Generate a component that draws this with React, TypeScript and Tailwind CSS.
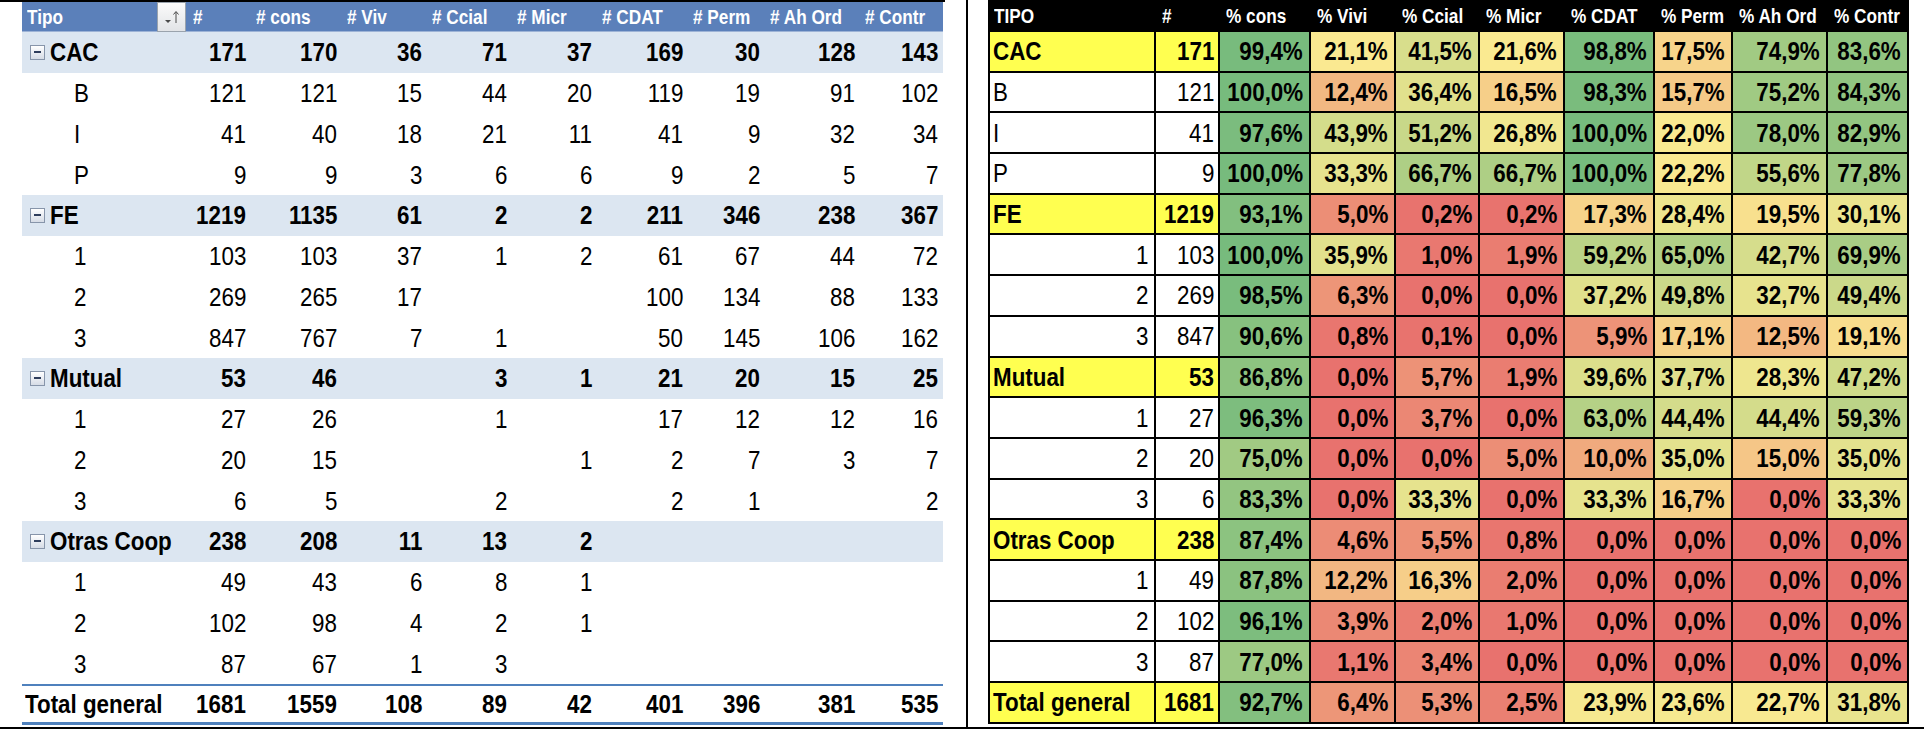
import React from 'react';

type Row = {
  label: string;
  kind: 'group' | 'child' | 'total';
  counts: (number | null)[];
  pct: number[];
};

const rows: Row[] = [
  { label: 'CAC', kind: 'group', counts: [171, 170, 36, 71, 37, 169, 30, 128, 143], pct: [99.4, 21.1, 41.5, 21.6, 98.8, 17.5, 74.9, 83.6] },
  { label: 'B', kind: 'child', counts: [121, 121, 15, 44, 20, 119, 19, 91, 102], pct: [100, 12.4, 36.4, 16.5, 98.3, 15.7, 75.2, 84.3] },
  { label: 'I', kind: 'child', counts: [41, 40, 18, 21, 11, 41, 9, 32, 34], pct: [97.6, 43.9, 51.2, 26.8, 100, 22.0, 78.0, 82.9] },
  { label: 'P', kind: 'child', counts: [9, 9, 3, 6, 6, 9, 2, 5, 7], pct: [100, 33.3, 66.7, 66.7, 100, 22.2, 55.6, 77.8] },
  { label: 'FE', kind: 'group', counts: [1219, 1135, 61, 2, 2, 211, 346, 238, 367], pct: [93.1, 5.0, 0.2, 0.2, 17.3, 28.4, 19.5, 30.1] },
  { label: '1', kind: 'child', counts: [103, 103, 37, 1, 2, 61, 67, 44, 72], pct: [100, 35.9, 1.0, 1.9, 59.2, 65.0, 42.7, 69.9] },
  { label: '2', kind: 'child', counts: [269, 265, 17, null, null, 100, 134, 88, 133], pct: [98.5, 6.3, 0.0, 0.0, 37.2, 49.8, 32.7, 49.4] },
  { label: '3', kind: 'child', counts: [847, 767, 7, 1, null, 50, 145, 106, 162], pct: [90.6, 0.8, 0.1, 0.0, 5.9, 17.1, 12.5, 19.1] },
  { label: 'Mutual', kind: 'group', counts: [53, 46, null, 3, 1, 21, 20, 15, 25], pct: [86.8, 0.0, 5.7, 1.9, 39.6, 37.7, 28.3, 47.2] },
  { label: '1', kind: 'child', counts: [27, 26, null, 1, null, 17, 12, 12, 16], pct: [96.3, 0.0, 3.7, 0.0, 63.0, 44.4, 44.4, 59.3] },
  { label: '2', kind: 'child', counts: [20, 15, null, null, 1, 2, 7, 3, 7], pct: [75.0, 0.0, 0.0, 5.0, 10.0, 35.0, 15.0, 35.0] },
  { label: '3', kind: 'child', counts: [6, 5, null, 2, null, 2, 1, null, 2], pct: [83.3, 0.0, 33.3, 0.0, 33.3, 16.7, 0.0, 33.3] },
  { label: 'Otras Coop', kind: 'group', counts: [238, 208, 11, 13, 2, null, null, null, null], pct: [87.4, 4.6, 5.5, 0.8, 0, 0, 0, 0] },
  { label: '1', kind: 'child', counts: [49, 43, 6, 8, 1, null, null, null, null], pct: [87.8, 12.2, 16.3, 2.0, 0, 0, 0, 0] },
  { label: '2', kind: 'child', counts: [102, 98, 4, 2, 1, null, null, null, null], pct: [96.1, 3.9, 2.0, 1.0, 0, 0, 0, 0] },
  { label: '3', kind: 'child', counts: [87, 67, 1, 3, null, null, null, null, null], pct: [77.0, 1.1, 3.4, 0, 0, 0, 0, 0] },
  { label: 'Total general', kind: 'total', counts: [1681, 1559, 108, 89, 42, 401, 396, 381, 535], pct: [92.7, 6.4, 5.3, 2.5, 23.9, 23.6, 22.7, 31.8] },
];

const leftHeads = ['#', '# cons', '# Viv', '# Ccial', '# Micr', '# CDAT', '# Perm', '# Ah Ord', '# Contr'];
const rightHeads = ['TIPO', '#', '% cons', '% Vivi', '% Ccial', '% Micr', '% CDAT', '% Perm', '% Ah Ord', '% Contr'];

const LW = ['w-[166px]', 'w-[63px]', 'w-[91px]', 'w-[85px]', 'w-[85px]', 'w-[85px]', 'w-[91px]', 'w-[77px]', 'w-[95px]', 'w-[83px]'];
const RW = ['w-[168px]', 'w-[64px]', 'w-[91px]', 'w-[85px]', 'w-[84px]', 'w-[85px]', 'w-[90px]', 'w-[78px]', 'w-[95px]', 'w-[81px]'];

const FONT = "font-['Liberation_Sans','Arial',sans-serif]";

// excel-like 3 colour scale: min 0 red, median yellow, max 100 green
const RED = [232, 114, 110];
const YEL = [250, 234, 145];
const GRN = [119, 187, 125];
const MID = 21.35;

function mix(a: number[], b: number[], t: number) {
  const c = a.map((v, i) => Math.round(v + (b[i] - v) * t));
  return `rgb(${c[0]},${c[1]},${c[2]})`;
}

function scale(v: number) {
  if (v <= MID) return mix(RED, YEL, v / MID);
  return mix(YEL, GRN, (v - MID) / (100 - MID));
}

const fmt = (v: number) => v.toFixed(1).replace('.', ',') + '%';

// no Arial Narrow installed, so squeeze Arial-metric text horizontally
function N({ children, right }: { children: React.ReactNode; right?: boolean }) {
  return (
    <span className={`inline-block whitespace-nowrap scale-x-[0.86] ${right ? 'origin-right' : 'origin-left'}`}>
      {children}
    </span>
  );
}

function FilterButton() {
  return (
    <div className="w-[29px] h-[30px] border border-[#9aa3ad] bg-gradient-to-b from-[#fbfbfb] to-[#e2e4e7] flex items-center justify-center">
      <svg width="20" height="16" viewBox="0 0 20 16">
        <path d="M3 11h6l-3 3z" fill="#4a4a4a" />
        <path d="M14 14V3" stroke="#4a4a4a" strokeWidth="1" />
        <path d="M11.5 5.5L14 2.5l2.5 3" stroke="#4a4a4a" strokeWidth="1" fill="none" />
      </svg>
    </div>
  );
}

function Collapse() {
  return (
    <div className="w-[15px] h-[15px] mr-[5px] border border-[#8795aa] bg-gradient-to-b from-white to-[#d6dce6] flex items-center justify-center shrink-0">
      <div className="w-[7px] h-[2px] bg-[#2e3d5c]" />
    </div>
  );
}

function LeftTable() {
  return (
    <div className={`w-[921px] text-black ${FONT}`}>
      <div className="flex h-[30px] bg-[#5b80ba] text-white font-bold text-[20px] leading-none border-b border-[#9db3d6]">
        <div className={`${LW[0]} flex items-center justify-between pl-[5px] pr-[2px]`}>
          <N>Tipo</N>
          <FilterButton />
        </div>
        {leftHeads.map((h, i) => (
          <div key={h} className={`${LW[i + 1]} flex items-center pl-[5px]`}>
            <N>{h}</N>
          </div>
        ))}
      </div>
      {rows.map((r, ri) => {
        const bold = r.kind !== 'child';
        const rowCls =
          r.kind === 'group'
            ? 'bg-[#dce6f1]'
            : r.kind === 'total'
              ? 'border-t-2 border-b-[3px] border-[#4f81bd]'
              : '';
        return (
          <div key={ri} className={`flex h-[40.75px] text-[26px] leading-none ${bold ? 'font-bold' : ''} ${rowCls}`}>
            <div className={`${LW[0]} flex items-center ${r.kind === 'group' ? 'pl-[8px]' : r.kind === 'child' ? 'pl-[52px]' : 'pl-[3px]'}`}>
              {r.kind === 'group' && <Collapse />}
              <N>{r.label}</N>
            </div>
            {r.counts.map((c, ci) => (
              <div key={ci} className={`${LW[ci + 1]} flex items-center justify-end pr-[5px]`}>
                {c !== null && <N right>{c}</N>}
              </div>
            ))}
          </div>
        );
      })}
    </div>
  );
}

function RightTable() {
  return (
    <div className={`w-[921px] text-black ${FONT}`}>
      <div className="flex h-[32px] bg-black text-white font-bold text-[20px] leading-none">
        {rightHeads.map((h, i) => (
          <div key={h} className={`${RW[i]} flex items-center pl-[6px]`}>
            <N>{h}</N>
          </div>
        ))}
      </div>
      {rows.map((r, ri) => {
        const bold = r.kind !== 'child';
        const numLabel = /^\d+$/.test(r.label);
        const yellow = bold ? 'bg-[#ffff50] font-bold' : 'bg-white';
        return (
          <div key={ri} className="flex h-[40.7px] text-[26px] leading-none">
            <div
              className={`${RW[0]} flex items-center border-l-2 border-r-2 border-b-2 border-black ${yellow} ${numLabel ? 'justify-end pr-[6px]' : 'pl-[3px]'}`}
            >
              <N right={numLabel}>{r.label}</N>
            </div>
            <div className={`${RW[1]} flex items-center justify-end pr-[4px] border-r-2 border-b-2 border-black ${yellow}`}>
              <N right>{r.counts[0]}</N>
            </div>
            {r.pct.map((p, pi) => (
              <div
                key={pi}
                className={`${RW[pi + 2]} flex items-center justify-end pr-[6px] font-bold border-r-2 border-b-2 border-black`}
                style={{ backgroundColor: scale(p) }}
              >
                <N right>{fmt(p)}</N>
              </div>
            ))}
          </div>
        );
      })}
    </div>
  );
}

export default function App() {
  return (
    <div className="w-[1924px] h-[740px] bg-white flex flex-col">
      <div className="flex h-[727px]">
        <div className="w-[966px] flex flex-col">
          <div className="h-[2px] w-[945px] bg-black" />
          <div className="pl-[22px]">
            <LeftTable />
          </div>
        </div>
        <div className="w-[2px] bg-black" />
        <div className="pl-[20px]">
          <RightTable />
        </div>
      </div>
      <div className="h-[2px] bg-black" />
    </div>
  );
}
